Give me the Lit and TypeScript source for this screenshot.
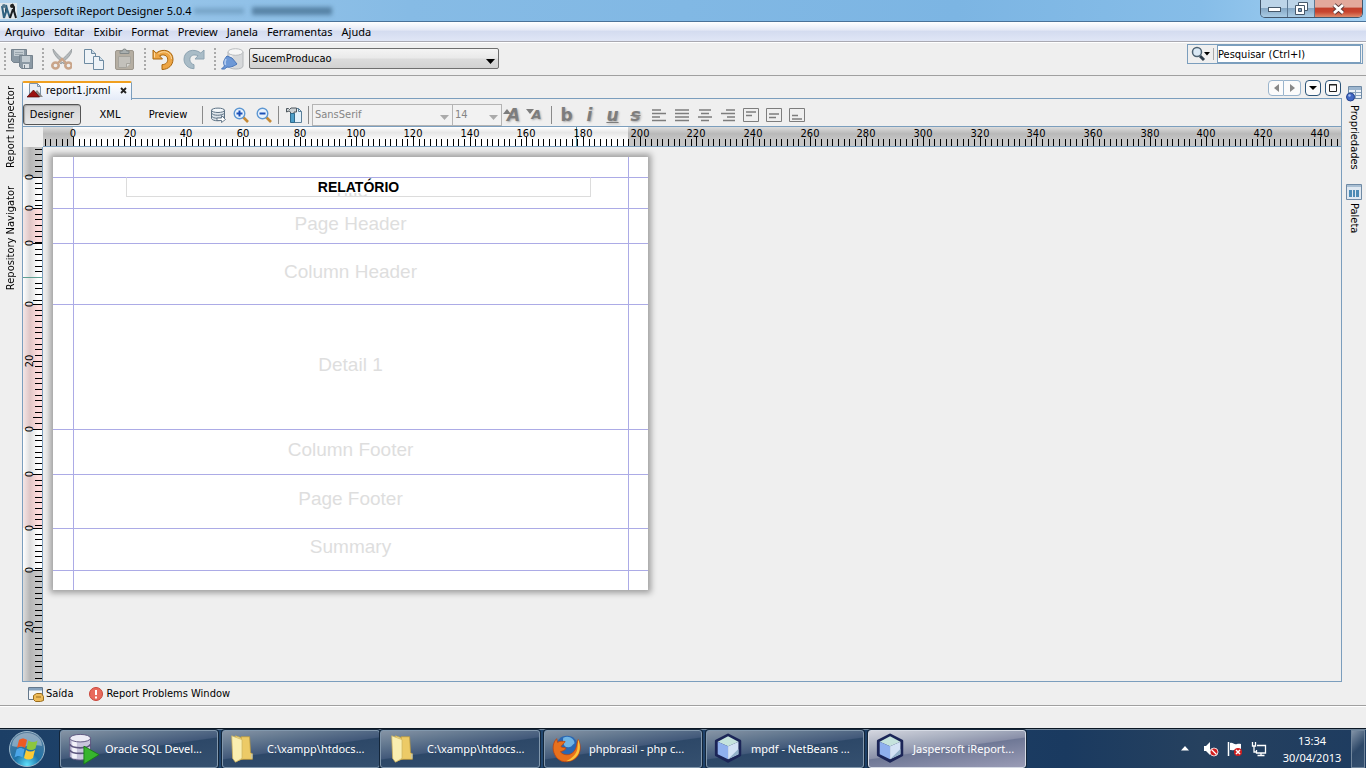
import { LitElement, html, svg, css } from "lit";
import { customElement, state } from "lit/decorators.js";

const STEP = 56.66;
const BANDS = [
  { name: "Title", height: 31 },
  { name: "Page Header", height: 35 },
  { name: "Column Header", height: 61 },
  { name: "Detail 1", height: 125 },
  { name: "Column Footer", height: 45 },
  { name: "Page Footer", height: 54 },
  { name: "Summary", height: 42 },
];

const icons = {
  saveAll: svg`<g stroke="#76838e" fill="#8b99a4"><path d="M1.500 2.500h15v13h-13l-2-2z"/><path fill="#c3ccd2" stroke="none" d="M4 3h10v6H4z"/><path stroke="#9aa6ae" d="M5 5.500h8M5 7.500h8"/><path d="M9.500 8.500h13v13h-11l-2-2z"/><path fill="#c3ccd2" stroke="none" d="M12 9h8v6h-8z"/><path fill="#dbe0e4" stroke="none" d="M13 17h6v4h-6z"/><path stroke="#6f7c86" d="M14.500 18v3"/></g>`,
  cut: svg`<path d="M5 2c0 5 4 9 11 15l2-2C12 10 8 6 5 2zM24 2c0 5-4 9-11 15l-2-2c6-5 10-9 13-13z" fill="#b4b9bc" stroke="#8f9598" stroke-width=".8"/><g fill="none" stroke="#c9a58a" stroke-width="2.600"><ellipse cx="7.500" cy="18.500" rx="3.200" ry="3"/><ellipse cx="20.500" cy="18.500" rx="3.200" ry="3"/></g><path d="M10 16l4-4 4 4" fill="none" stroke="#c9a58a" stroke-width="2.400"/>`,
  copy: svg`<g fill="#eef3f7" stroke="#6d8aa1"><path d="M4.500 2.500h7l4 4v10h-11z"/><path fill="#cddbe6" d="M11.500 2.500v4h4"/><path d="M13.500 9.500h6l4 4v9h-10z"/><path fill="#cddbe6" d="M19.500 9.500v4h4"/></g>`,
  paste: svg`<rect x="3.500" y="3.500" width="18" height="19" rx="1.500" fill="#b5aea2" stroke="#9d978d"/><path d="M8 6.500V4h2.500a2 2 0 0 1 4 0H17v2.500z" fill="#aab0b0" stroke="#828888"/><path d="M6.500 9.500h12v7l-4 4h-8z" fill="#c3c1bb" stroke="#a6a49d"/><path d="M14.500 20.500v-4h4" fill="#d8d7d3" stroke="#a6a49d"/>`,
  undo: svg`<path d="M3 3v9h9.500l-3-3.200c4-2 8-.4 8.200 3.400.2 3.400-2.200 5.300-5.700 5.500v4.800c6.500 0 11-4.300 11-10.300C23 4 13.500.5 6.200 6z" fill="#eda544" stroke="#a9660f" stroke-linejoin="round"/><path d="M4.500 5.500v5M8.500 6.500c6-4 13-.5 13 5.500" fill="none" stroke="#fbd9a0"/>`,
  redo: svg`<path d="M22 3v9h-9l3-3.200c-4-2-8-.4-8.200 3.400 0 3 1.700 4.800 4.200 5.500v4C6 21.500 2 17.500 2 12.200 2 4 11.500.5 18.800 6z" fill="#a9bcc7" stroke="#8ea4b2" stroke-linejoin="round"/>`,
  database: svg`<path d="M8 5v14c1 4 15 4 15 0V5z" fill="#d6d8da" stroke="#b4b7ba"/><path d="M11 8v13" stroke="#efefef" stroke-width="3"/><ellipse cx="15.500" cy="5" rx="7.500" ry="3.300" fill="#f6f6f6" stroke="#b9bcbf"/><path d="M1.500 22l3-3c-2-4 0-7 2.500-10l5 2 5 6c-3 2-7 4-10 3l-2.500 2z" fill="#6d98d6" stroke="#4774b8"/><path d="M6 12c-1 2-1.500 4-.5 6" fill="none" stroke="#b5cdf0" stroke-width="1.500"/>`,
};

const small = {
  dbQuery: svg`<path d="M1.500 3v8.500c1 3 11 3 13 0V3z" fill="#dfe6ec" stroke="#5d7284"/><ellipse cx="8" cy="3.300" rx="6.500" ry="2.200" fill="#f4f8fb" stroke="#5d7284"/><path d="M1.500 6c1 3 11 3 13 0M1.500 9c1 3 11 3 13 0" fill="none" stroke="#5d7284"/><path d="M7 11h4.500V8.500l4 4-4 3v-2H7z" fill="#fff" stroke="#5d7284" stroke-width=".9"/>`,
  zoomIn: svg`<path d="M10 10l5 5" stroke="#c58a37" stroke-width="2.600"/><circle cx="6.500" cy="6.500" r="5.300" fill="#e9f3fd" stroke="#5d97d2" stroke-width="1.400"/><path d="M3.500 6.500h6M6.500 3.500v6" stroke="#1c51b8" stroke-width="2"/>`,
  zoomOut: svg`<path d="M10 10l5 5" stroke="#c58a37" stroke-width="2.600"/><circle cx="6.500" cy="6.500" r="5.300" fill="#e9f3fd" stroke="#5d97d2" stroke-width="1.400"/><path d="M3.500 6.500h6" stroke="#1c51b8" stroke-width="2"/>`,
  compile: svg`<path d="M6.500 1.500h6l3 3v11h-9z" fill="#e3f1fa" stroke="#5a7f99"/><path d="M12.500 1.500v3h3" fill="none" stroke="#5a7f99"/><path d="M.5 5V1.500h2l1 1L5 1h5.500v4H8v2H4.500V5L3 4z" fill="#cdd3d6" stroke="#4e575d"/><path d="M4.500 6.500h4v9h-4z" fill="#4e9fc9" stroke="#2f6a8c"/>`,
  left: svg`<path d="M1 3h9M1 6.500h14M1 10h8M1 13.500h14" />`,
  justify: svg`<path d="M1 3h14M1 6.500h14M1 10h14M1 13.500h14" />`,
  center: svg`<path d="M2 3h12M4 6.500h8M1 10h14M4 13.500h8" />`,
  right: svg`<path d="M6 3h9M1 6.500h14M7 10h8M3 13.500h12" />`,
  top: svg`<path stroke-width="1" fill="none" d="M.5 1.500h15v13H.5z"/><path d="M3 5h10M3 8.500h6"/>`,
  middle: svg`<path stroke-width="1" fill="none" d="M.5 1.500h15v13H.5z"/><path d="M3 7h10M3 10.500h7"/>`,
  bottom: svg`<path stroke-width="1" fill="none" d="M.5 1.500h15v13H.5z"/><path d="M3 12h10M3 8.500h6"/>`,
};

const cube = svg`<path d="M16 2l12.500 6.500v15L16 30 3.500 23.500v-15z" fill="#1b2557" stroke="#1b2557" stroke-width="3" stroke-linejoin="round"/><path d="M16 3.500l11 5.700L16 14 5 9.200z" fill="#c5e3dd"/><path d="M5 9.200L16 14v14L5 22.500z" fill="#8fb0ee"/><path d="M27 9.200L16 14v14l11-5.500z" fill="#d3e2f5"/><path d="M27 17v5.500L16 28z" fill="#93b1c9"/>`;
const folder = svg`<path d="M9 3l9 3v21l-8 3-2-3z" fill="#f5e08b" stroke="#c9a94a" stroke-width=".8"/><path d="M15 4h9l1 17 2 1v6H15z" fill="#ecca66" stroke="#bd9a3b" stroke-width=".8"/><path d="M5 3l11 4v20l-7 4-3-4z" fill="#f9eeb0" stroke="#cdb25c" stroke-width=".8"/><path d="M26.500 22v5" stroke="#a9c7e0"/>`;
const taskIcons = {
  cube,
  folder,
  oracle: svg`<path d="M3 5v20c2 5 20 5 22 0V5z" fill="#c9c6dd" stroke="#5d567f"/><path d="M8 8v19" stroke="#f3f2fa" stroke-width="5"/><path d="M3 12c2 5 20 5 22 0M3 18c2 5 20 5 22 0" fill="none" stroke="#5d567f" stroke-width="1.800"/><ellipse cx="14" cy="5.500" rx="11" ry="4" fill="#ecebf5" stroke="#5d567f"/><path d="M18 14l16 9-16 10z" fill="#37b52d" stroke="#1a7d19"/>`,
  firefox: svg`<circle cx="17" cy="15" r="12" fill="#2a67b3"/><path d="M13 5c6-3 12 1 12 6-3 2-3 5-8 4-3 0-5-5-4-10z" fill="#6fb4e4"/><path d="M29 7c3 6 3 14-2 19-7 7-19 6-23-3C1 17 2 10 6 6l1 4c3-2 5-1 8-1-1 3-5 4-4 6l5 1c-1 3-4 3-6 4 4 5 13 4 16-3 2-4 1-7 3-10z" fill="#e8701c" stroke="#b8410f" stroke-width=".8"/><path d="M29 7c3 7 2 15-3 19-3 3-6 4-10 4 7-3 11-8 12-13z" fill="#f9c23c"/>`,
};

@customElement("app-root")
export class AppRoot extends LitElement {
  @state() private viewWidth = window.innerWidth;
  @state() private viewHeight = window.innerHeight;

  private onResize = () => {
    this.viewWidth = window.innerWidth;
    this.viewHeight = window.innerHeight;
  };

  connectedCallback() {
    super.connectedCallback();
    window.addEventListener("resize", this.onResize);
  }

  disconnectedCallback() {
    window.removeEventListener("resize", this.onResize);
    super.disconnectedCallback();
  }

  static styles = css`
    :host {
      display: flex;
      flex-direction: column;
      min-height: 100vh;
      background: #efefef;
      color: #000;
      font: 11px/14px "DejaVu Sans Condensed", "DejaVu Sans", sans-serif;
      font-stretch: condensed;
    }
    * { box-sizing: border-box; }
    button, input, select { font: inherit; color: inherit; margin: 0; padding: 0; border: 0; background: none; border-radius: 0; }
    svg { display: block; flex: none; }

    .titlebar {
      display: flex; align-items: flex-start; height: 22px; padding: 0 3px 0 0; border-bottom: 1px solid #4a7298;
      background: linear-gradient(90deg, #b3d4ee, #98c5e9 10%, #86bbe5 30%, #7cb5e3 70%, #86bde8 88%, #a5d2f3);
    }
    .app-icon { margin: 3px 5px 0 0; }
    .segoe { font-family: "Noto Sans", "Open Sans", sans-serif; font-stretch: normal; }
    .caption { flex: none; margin: 4px 0 0; font-size: 11px; font-weight: 400; line-height: 14px; }
    .ghost { display: flex; gap: 8px; align-items: center; margin: 7px auto 0 3px; filter: blur(2px); }
    .smudge { height: 6px; width: 50px; background: #5c87aa; opacity: .5; }
    .smudge-wide { height: 8px; width: 80px; background: #345b7c; opacity: .6; }
    .win-buttons { display: flex; height: 18px; border: 1px solid #42566b; border-top: 0; border-radius: 0 0 5px 5px; overflow: hidden; }
    .win { width: 27px; display: grid; place-items: center; border-right: 1px solid #5c7893; background: linear-gradient(#bcd4e8 45%, #86a8c5 50%, #a9cbe4); }
    .win-close { width: 47px; border: 0; background: linear-gradient(#e3a99c 40%, #c2402c 50%, #c8452f 70%, #df8c6c); }

    .menubar {
      display: flex; align-items: center; gap: 9px; height: 20px; padding-left: 5px; font-size: 11px;
      background: linear-gradient(#fff, #e6eaf6 40%, #d4dcf0 50%, #e0e6f6); border-bottom: 1px solid #a9a9b2;
    }
    .toolbar { display: flex; align-items: flex-start; height: 34px; padding: 0 3px 0 4px; border-bottom: 1px solid #a0a0a0; box-shadow: inset 0 1px #fff; }
    .group { display: flex; gap: 8px; margin: 5px 8px 0 0; align-items: center; }
    .handle { width: 2px; height: 22px; margin-right: -4px; background: repeating-linear-gradient(#aaa 0 2px, transparent 2px 4px); }
    .combo { position: relative; display: flex; }
    .combo select { appearance: none; width: 100%; padding: 0 20px 0 2px; opacity: 1; }
    .caret { position: absolute; right: 4px; top: 50%; width: 9px; height: 5px; pointer-events: none; }
    .source { width: 250px; margin: 6px auto 0 -3px; }
    .source select { height: 21px; border: 1px solid #6f6f6f; border-radius: 2px; background: linear-gradient(#f4f4f4, #e9e9e9 48%, #dcdcdc 52%, #d2d2d2); }
    .search { display: flex; align-items: center; width: 176px; height: 20px; margin-top: 2px; padding: 0 1px 0 3px; border: 1px solid #7b9ebd; }
    .search-sep { width: 1px; height: 12px; margin: 0 3px 0 2px; background: #aaa; }
    .search input { flex: 1; min-width: 0; height: 18px; border: 1px solid #7b9ebd; background: #fff; }
    .search input::placeholder { color: #000; opacity: 1; }

    .main { display: flex; flex: 1; min-height: 0; }
    .side { display: flex; flex-direction: column; align-items: center; width: 22px; padding-top: 10px; }
    .side-right { width: 24px; }
    .vtab { display: flex; align-items: center; gap: 3px; writing-mode: vertical-rl; width: 16px; margin-bottom: 14px; white-space: nowrap; line-height: 16px; }
    .vtab-up { transform: rotate(180deg); margin-bottom: 18px; }
    .center { flex: 1; min-width: 0; display: flex; flex-direction: column; }
    .tabs { display: flex; align-items: flex-start; justify-content: space-between; height: 22px; padding: 4px 1px 0 0; }
    .tab { display: flex; align-items: center; width: 110px; height: 19px; margin: 1px 0 -1px; padding: 0 4px 2px; gap: 3px; border: 1px solid #7b9ebd; border-top: 2px solid #f0a020; border-bottom: 0; border-radius: 2px 2px 0 0; background: linear-gradient(#fff, #e4ebf8); position: relative; z-index: 1; }
    .close { margin-left: auto; width: 7px; height: 12px; display: grid; place-items: center; }
    .tab-tools { display: flex; gap: 4px; }
    .pair { display: flex; }
    .tool { width: 16px; height: 16px; display: grid; place-items: center; border: 1px solid #2c5478; border-radius: 4px; background: #fbfbfb; }
    .tool-off { border-color: #9ab4cc; }
    .tool-first { border-radius: 4px 0 0 4px; }
    .tool-last { border-radius: 0 4px 4px 0; border-left: 0; width: 17px; }

    .editor { flex: 1; min-height: 0; display: flex; flex-direction: column; border: 1px solid #7b9ebd; }
    .edit-bar { display: flex; align-items: center; height: 28px; padding-top: 4px; border-bottom: 1px solid #7b9ebd; }
    .modes { display: flex; margin-right: 2px; }
    .mode { width: 58px; height: 21px; }
    .mode-on { border: 1px solid #555; border-radius: 3px; background: linear-gradient(#d2d2d2, #e8e8e8); box-shadow: inset 1px 1px 1px #aaa; }
    .sep { width: 1px; height: 18px; margin: 0 3px; background: #8a8a8a; }
    .btn { position: relative; width: 23px; height: 22px; display: grid; place-items: center; color: #7d7d7d; stroke: #7d7d7d; stroke-width: 1.7; }
    .picture { stroke: none; stroke-width: 1; }
    .glyph { font: 900 17px/20px "DejaVu Sans", sans-serif; font-stretch: normal; text-shadow: 1px 1px 2px #aaa; stroke: none; }
    .italic { font-style: italic; }
    .under { text-decoration: underline; }
    .strike { text-decoration: line-through; }
    .small { font-size: 13px; }
    .arrow { position: absolute; left: 1px; top: 5px; fill: #7d7d7d; }
    .family { width: 141px; color: #858585; }
    .size { width: 50px; margin-left: -1px; color: #858585; }
    .family select, .size select { height: 22px; border: 1px solid #b4b4b4; background: #f2f2f2; }

    .workspace { flex: 1; min-height: 0; display: grid; grid-template: 20px 1fr / 20px 1fr; }
    .ruler-h { grid-column: 2; height: 20px; min-width: 0; overflow: hidden; border-bottom: 1px solid #7b9ebd; }
    .ruler-v { grid-row: 2; min-height: 0; overflow: hidden; border-right: 1px solid #7b9ebd; contain: size; }
    .ruler-text { font: 11px "DejaVu Sans Condensed", "DejaVu Sans", sans-serif; font-stretch: condensed; text-anchor: middle; }
    .canvas { min-width: 0; padding: 10px 0 0 10px; }
    .sheet { position: relative; width: 595px; padding: 20px 0 19px; background: #fff; box-shadow: 0 0 6px 3px rgba(0, 0, 0, .34); }
    .bands { border-top: 1px solid #acabe6; }
    .band { display: flex; align-items: center; justify-content: center; padding-bottom: 5px; border-bottom: 1px solid #acabe6; color: #dedede; font: 19px/22px "Liberation Sans", Arial, sans-serif; font-stretch: normal; }
    .guide { position: absolute; top: 0; bottom: 0; left: 20px; width: 556px; border: solid #acabe6; border-width: 0 1px; pointer-events: none; }
    .field { position: absolute; top: 20px; left: 73px; width: 465px; height: 20px; display: flex; justify-content: center; border: 1px solid #dcdcdc; border-top-color: #acabe6; color: #000; font: bold 14px/17px "Liberation Sans", Arial, sans-serif; font-stretch: normal; }
    .field-text { height: 15px; padding: 1px 0; line-height: 17px; background: #fff; }

    .outputs { display: flex; align-items: center; gap: 16px; height: 24px; padding: 1px 0 0 28px; border-bottom: 1px solid #a0a0a0; }
    .output { display: flex; align-items: center; gap: 2px; }
    .status { height: 22px; border-top: 1px solid #fff; }

    .taskbar { display: flex; height: 40px; border-top: 1px solid #0b1724; box-shadow: inset 0 1px #6f8499; background: linear-gradient(90deg, #1c3f66, #254b74 30%, #1a3a60 78%, #26415f 88%, #1e3c60); color: #fff; }
    .start { width: 60px; padding-left: 8px; }
    .tasks { display: flex; gap: 4px; }
    .stack { display: flex; }
    .task { display: flex; align-items: center; width: 158px; height: 38px; margin-top: 1px; padding: 0 8px 0 6px; gap: 6px; border: 1px solid #8298ad; border-radius: 3px; box-shadow: 0 0 0 1px #14263a; background: linear-gradient(172deg, #8694a5 0, #62778f 25%, #42597a 48%, #2d4868 50%, #35506f 100%); white-space: nowrap; }
    .task-folder { padding-left: 4px; gap: 8px; }
    .stacked { width: 160px; padding-left: 6px; }
    .task-on { border-color: #d5dae4; background: linear-gradient(172deg, #d3d5de 0, #a6adbe 30%, #8a90a9 48%, #6f7896 50%, #9a9cb6 100%); }
    .tray { display: flex; align-items: center; gap: 8px; margin-left: auto; }
    .more { margin-right: 6px; }
    .clock { display: block; width: 62px; margin-left: 6px; text-align: center; line-height: 17px; }
    .desktop { width: 14px; height: 38px; margin-right: 1px; border: 1px solid #71869c; background: linear-gradient(135deg, #8192a6, #2d4868 50%, #35506f); }
  `;

  private caret(color: string) {
    return html`<svg class="caret" viewBox="0 0 9 5"><path d="M0 0h9L4.500 5z" fill=${color} /></svg>`;
  }

  private tool24(label: string, art: unknown) {
    return html`<button aria-label=${label}><svg width="24" height="24" viewBox="0 0 24 24">${art}</svg></button>`;
  }

  private icon16(label: string, art: unknown, cls = "") {
    return html`<button class="btn ${cls}" aria-label=${label}><svg width="16" height="16" viewBox="0 0 16 16">${art}</svg></button>`;
  }

  private horizontalRuler() {
    const origin = 30;
    const length = Math.max(this.viewWidth - 68, 0);
    let ticks = "";
    for (let i = -5; origin + (i * STEP) / 10 < length; i++) {
      const x = Math.round(origin + (i * STEP) / 10);
      ticks += `M${x + 0.5} ${i % 10 === 0 ? 10 : 12}V19`;
    }
    const count = Math.floor((length - origin - 12) / STEP) + 1;
    const labels = Array.from({ length: Math.max(count, 0) }, (_, i) => i);
    return html`<div class="ruler-h"><svg width=${length} height="19">
      <defs><linearGradient id="h" x2="0" y2="1"><stop stop-color="#fff"/><stop offset=".3" stop-color="#e6e6e6"/><stop offset=".7" stop-color="#fff"/></linearGradient>
      <linearGradient id="hg" x2="0" y2="1"><stop stop-color="#dcdcdc"/><stop offset=".35" stop-color="#b9b9b9"/><stop offset=".7" stop-color="#c6c6c6"/></linearGradient></defs>
      <rect width="100%" height="19" fill="url(#hg)"/><rect x="30" width="555" height="19" fill="url(#h)"/>
      <path d=${ticks} stroke="#000" shape-rendering="crispEdges"/>
      <path d="M533.500 0V19" stroke="#4f8a96"/>
      ${labels.map((n) => svg`<text class="ruler-text" x=${Math.round(origin + n * STEP)} y="10">${n * 20}</text>`)}
    </svg></div>`;
  }

  private verticalRuler() {
    const length = Math.max(this.viewHeight - 234, 0);
    let y = 30;
    let ticks = "";
    const mark = (v: number, from: number) => `M${from} ${Math.round(v) + 0.5}H20`;
    for (let v = y - STEP / 10; v > 0; v -= STEP / 10) ticks += mark(v, 12);
    const pinks: unknown[] = [];
    const labels: { y: number; text: string }[] = [];
    const bandsHeight = BANDS.reduce((sum, b) => sum + b.height, 0);
    const rest = Math.max(length - 30 - bandsHeight, 0);
    [...BANDS, { name: "", height: rest }].forEach((band, index) => {
      for (let k = 0; k * (STEP / 10) < band.height; k++) {
        const at = y + (k * STEP) / 10;
        ticks += mark(at, k % 10 ? 12 : 10);
        if (k % 10 === 0 && band.height - k * (STEP / 10) > 12) labels.push({ y: Math.round(at), text: String(k * 2) });
      }
      if (index % 2 === 1 && band.name) pinks.push(svg`<rect y=${y} width="20" height=${band.height} fill="url(#vp)"/>`);
      y += band.height;
    });
    return html`<div class="ruler-v"><svg width="20" height=${length}>
      <defs><linearGradient id="v"><stop stop-color="#fff"/><stop offset=".35" stop-color="#dedede"/><stop offset=".75" stop-color="#fff"/></linearGradient>
      <linearGradient id="vg"><stop stop-color="#dcdcdc"/><stop offset=".35" stop-color="#b5b5b5"/><stop offset=".75" stop-color="#c6c6c6"/></linearGradient>
      <linearGradient id="vp"><stop stop-color="#f3e6e6"/><stop offset=".35" stop-color="#e0c6c6"/><stop offset=".75" stop-color="#ffdcdc"/></linearGradient></defs>
      <rect width="20" height="100%" fill="url(#vg)"/><rect y="30" width="20" height="393" fill="url(#v)"/>${pinks}
      <path d=${ticks} stroke="#000" shape-rendering="crispEdges"/>
      <path d="M0 130.500H20" stroke="#5f9f93"/>
      ${labels.map((l) => svg`<text class="ruler-text" transform="translate(10 ${l.y}) rotate(-90)">${l.text}</text>`)}
    </svg></div>`;
  }

  private task(label: string, art: unknown, cls = "") {
    return html`<button class="task segoe ${cls}"><svg width="32" height="32" viewBox="0 0 34 34">${art}</svg>${label}</button>`;
  }

  render() {
    return html`
      <header class="titlebar">
        <svg class="app-icon" width="17" height="16" viewBox="0 0 17 16"><rect width="17" height="16" fill="#dfe7ec"/><path d="M2 3l2 12M6 2l1 4-3 9M7 6l3 9" stroke="#2f6280" stroke-width="2"/><path d="M12 1l2 3v4l2 7M13 6l-3 9" stroke="#1b1f24" stroke-width="2"/><circle cx="4" cy="3" r="2" fill="#54778c"/><circle cx="12" cy="3" r="2" fill="#222"/></svg>
        <h1 class="caption segoe">Jaspersoft iReport Designer 5.0.4</h1>
        <div class="ghost"><div class="smudge"></div><div class="smudge-wide"></div></div>
        <div class="win-buttons">
          <button class="win" aria-label="Minimizar"><svg width="13" height="6"><rect x=".5" y="1.500" width="12" height="4" fill="#fff" stroke="#46586a"/></svg></button>
          <button class="win" aria-label="Restaurar"><svg width="13" height="13"><path d="M3.500.5h9v8h-9z" fill="#fff" stroke="#46586a"/><path d="M.5 3.500h9v9h-9z" fill="#fff" stroke="#46586a"/><path d="M3.500 6.500h3v3h-3z" fill="#7f9fbc" stroke="#46586a"/></svg></button>
          <button class="win win-close" aria-label="Fechar"><svg width="13" height="12"><path d="M2 2l9 8M11 2l-9 8" stroke="#5b3a3a" stroke-width="4.500"/><path d="M2 2l9 8M11 2l-9 8" stroke="#fff" stroke-width="2.800"/></svg></button>
        </div>
      </header>

      <nav class="menubar segoe">
        ${["Arquivo", "Editar", "Exibir", "Format", "Preview", "Janela", "Ferramentas", "Ajuda"].map((m) => html`<button>${m}</button>`)}
      </nav>

      <div class="toolbar">
        <div class="group"><div class="handle"></div>${this.tool24("Salvar tudo", icons.saveAll)}</div>
        <div class="group"><div class="handle"></div>${this.tool24("Recortar", icons.cut)}${this.tool24("Copiar", icons.copy)}${this.tool24("Colar", icons.paste)}</div>
        <div class="group"><div class="handle"></div>${this.tool24("Desfazer", icons.undo)}${this.tool24("Refazer", icons.redo)}</div>
        <div class="group"><div class="handle"></div>${this.tool24("Fonte de dados", icons.database)}</div>
        <div class="combo source"><select aria-label="Fonte de dados"><option>SucemProducao</option></select>${this.caret("#000")}</div>
        <div class="search">
          <svg width="20" height="16"><path d="M9 10l4 4" stroke="#2f3e4c" stroke-width="3"/><circle cx="6" cy="6" r="4.500" fill="#dbe9f5" stroke="#4d6272" stroke-width="1.500"/><path d="M13 6h6l-3 3.500z"/></svg>
          <div class="search-sep"></div>
          <input aria-label="Pesquisar" placeholder="Pesquisar (Ctrl+I)" />
        </div>
      </div>

      <div class="main">
        <aside class="side">
          <button class="vtab vtab-up">Report Inspector</button>
          <button class="vtab vtab-up">Repository Navigator</button>
        </aside>
        <div class="center">
          <div class="tabs">
            <div class="tab">
              <svg width="16" height="16"><path d="M2.500.5h8l3 3v10h-11z" fill="#e9eff5" stroke="#7d93a8"/><path d="M10.500.5v3h3" fill="none" stroke="#7d93a8"/><path d="M10 7l6 7H4z" fill="#8b8b8b"/><path d="M0 14l6.500-7 6 7z" fill="#9c1212" stroke="#4a0808" stroke-width=".7"/></svg>
              <span>report1.jrxml</span>
              <button class="close" aria-label="Fechar aba"><svg width="7" height="7"><path d="M1 1l5 5M6 1L1 6" stroke="#222" stroke-width="1.800"/></svg></button>
            </div>
            <div class="tab-tools">
              <div class="pair">
                <button class="tool tool-off tool-first" aria-label="Anterior"><svg width="5" height="8"><path d="M5 0v8L0 4z" fill="#888"/></svg></button>
                <button class="tool tool-off tool-last" aria-label="Seguinte"><svg width="5" height="8"><path d="M0 0v8l5-4z" fill="#888"/></svg></button>
              </div>
              <button class="tool" aria-label="Lista de abas"><svg width="8" height="4"><path d="M0 0h8L4 4z"/></svg></button>
              <button class="tool" aria-label="Maximizar"><svg width="8" height="8"><path d="M.5.5h7v7h-7zM0 1h8" fill="none" stroke="#222"/></svg></button>
            </div>
          </div>

          <section class="editor">
            <div class="edit-bar">
              <div class="modes"><button class="mode mode-on">Designer</button><button class="mode">XML</button><button class="mode">Preview</button></div>
              <div class="sep"></div>
              ${this.icon16("Consulta", small.dbQuery, "picture")}${this.icon16("Ampliar", small.zoomIn, "picture")}${this.icon16("Reduzir", small.zoomOut, "picture")}
              <div class="sep"></div>
              ${this.icon16("Compilar", small.compile, "picture")}
              <div class="sep"></div>
              <div class="combo family"><select disabled aria-label="Fonte"><option>SansSerif</option></select>${this.caret("#aaa")}</div>
              <div class="combo size"><select disabled aria-label="Tamanho"><option>14</option></select>${this.caret("#aaa")}</div>
              <button class="btn glyph italic" aria-label="Aumentar fonte"><svg class="arrow" width="8" height="6"><path d="M0 5l4-5 4 5z"/></svg>A</button>
              <button class="btn glyph italic small" aria-label="Diminuir fonte"><svg class="arrow" width="8" height="6"><path d="M0 0h8L4 5z"/></svg>A</button>
              <div class="sep"></div>
              <button class="btn glyph">b</button><button class="btn glyph italic">i</button><button class="btn glyph italic under">u</button><button class="btn glyph italic strike">s</button>
              ${this.icon16("Alinhar à esquerda", small.left)}${this.icon16("Justificar", small.justify)}${this.icon16("Centralizar", small.center)}${this.icon16("Alinhar à direita", small.right)}
              ${this.icon16("Alinhar ao topo", small.top)}${this.icon16("Alinhar ao meio", small.middle)}${this.icon16("Alinhar à base", small.bottom)}
            </div>
            <div class="workspace">
              ${this.horizontalRuler()}${this.verticalRuler()}
              <div class="canvas">
                <div class="sheet">
                  <div class="bands">${BANDS.map((b) => html`<div class="band" style="height:${b.height}px">${b.name}</div>`)}</div>
                  <div class="guide"></div>
                  <div class="field"><span class="field-text">RELATÓRIO</span></div>
                </div>
              </div>
            </div>
          </section>
        </div>
        <aside class="side side-right">
          <button class="vtab"><svg width="16" height="16"><path d="M2.500.5h13v12h-13z" fill="#eef3f8" stroke="#6f8aa5"/><path d="M3 1h12v3H3z" fill="#9db6cf"/><path d="M3 6.500h12M3 9.500h12M9.500 4v8" stroke="#8ba4bd"/><circle cx="4.500" cy="11" r="4" fill="#4268c4" stroke="#27458f"/><circle cx="3.500" cy="9.500" r="1.200" fill="#a9c0f0"/></svg>Propriedades</button>
          <button class="vtab"><svg width="16" height="16"><path d="M.5.5h15v15H.5z" fill="#dfe8f1" stroke="#6f8aa5"/><path d="M1 1h14v2H1z" fill="#a9bfd3"/><path d="M3 6h3v7H3zM7 6h2v7H7zM10 6h3v7h-3z" fill="#4d8bb5"/></svg>Paleta</button>
        </aside>
      </div>

      <div class="outputs">
        <button class="output"><svg width="16" height="16"><path d="M.5 1.500h14v12H.5z" fill="#f4f6f8" stroke="#64788b"/><path d="M1 2h13v2.500H1z" fill="#86a2bd"/><path d="M5.500 9.500l3-2h5l2 3v4l-3 1h-5l-2-2z" fill="#eebb58" stroke="#9a6c1c"/><path d="M8 11h5" stroke="#9a6c1c"/></svg>Saída</button>
        <button class="output"><svg width="15" height="16"><circle cx="7" cy="8" r="6.500" fill="#e86a5c" stroke="#c8463a"/><path d="M7 4v5M7 10.500v2" stroke="#fff" stroke-width="2"/></svg>Report Problems Window</button>
      </div>
      <div class="status"></div>

      <footer class="taskbar segoe">
        <button class="start" aria-label="Iniciar"><svg width="38" height="38" viewBox="0 0 38 38">
          <defs><radialGradient id="orb" cx=".5" cy=".95" r=".9"><stop stop-color="#5fe0fb"/><stop offset=".4" stop-color="#1d73a8"/><stop offset="1" stop-color="#547a9b"/></radialGradient></defs>
          <circle cx="19" cy="19" r="17.500" fill="url(#orb)" stroke="#9db9cc"/><path d="M4 16a15 13 0 0 1 30 0c-8-3-20 3-30 0z" fill="#fff" opacity=".35"/>
          <path d="M11 10c3-2 5-2 8 0l-2 8c-3-2-5-2-8 0z" fill="#ee5a24"/><path d="M20.500 10.500c3 2 6 2 9 0l-2 8c-3 2-6 2-9 0z" fill="#8cc63e"/><path d="M8.500 19.500c3-2 5-2 8 0l-2 8c-3-2-5-2-8 0z" fill="#4ba6e8"/><path d="M18 20c3 2 6 2 9 0l-2 8c-3 2-6 2-9 0z" fill="#fbca35"/></svg></button>
        <div class="tasks">
          ${this.task("Oracle SQL Devel...", taskIcons.oracle)}
          <div class="stack">${this.task("C:\\xampp\\htdocs...", taskIcons.folder, "task-folder")}${this.task("C:\\xampp\\htdocs...", taskIcons.folder, "task-folder stacked")}</div>
          ${this.task("phpbrasil - php c...", taskIcons.firefox)}
          ${this.task("mpdf - NetBeans ...", taskIcons.cube)}
          ${this.task("Jaspersoft iReport...", taskIcons.cube, "task-on")}
        </div>
        <div class="tray">
          <svg class="more" width="8" height="5"><path d="M0 4.500h8L4 0z" fill="#fff"/></svg>
          <svg width="16" height="16"><path d="M1 5h2l4-4v13l-4-4H1z" fill="#fff"/><circle cx="11" cy="11" r="4" fill="#d21e1e" stroke="#fff" stroke-width=".8"/><path d="M8.500 8.500l5 5" stroke="#fff" stroke-width="1.300"/></svg>
          <svg width="16" height="16"><path d="M1.500 1v14" stroke="#fff" stroke-width="1.500"/><path d="M3 2c3-1 4 2 7 1 2-.5 3 0 4 0v6c-3 1-4-1-7 0-2 .5-3 0-4 0z" fill="#fff"/><circle cx="11" cy="11" r="4" fill="#d21e1e"/><path d="M9 9l4 4M13 9l-4 4" stroke="#fff" stroke-width="1.500"/></svg>
          <svg width="16" height="16"><path d="M6 4.500h8.500v7.500h-9V9M10 12v2.500M6.500 14.500h7" fill="none" stroke="#fff" stroke-width="1.300"/><path d="M1.500 1v4h3V1M3 5v6h2" fill="none" stroke="#fff" stroke-width="1.300"/></svg>
          <time class="clock">13:34<br />30/04/2013</time>
          <button class="desktop" aria-label="Mostrar área de trabalho"></button>
        </div>
      </footer>
    `;
  }
}
